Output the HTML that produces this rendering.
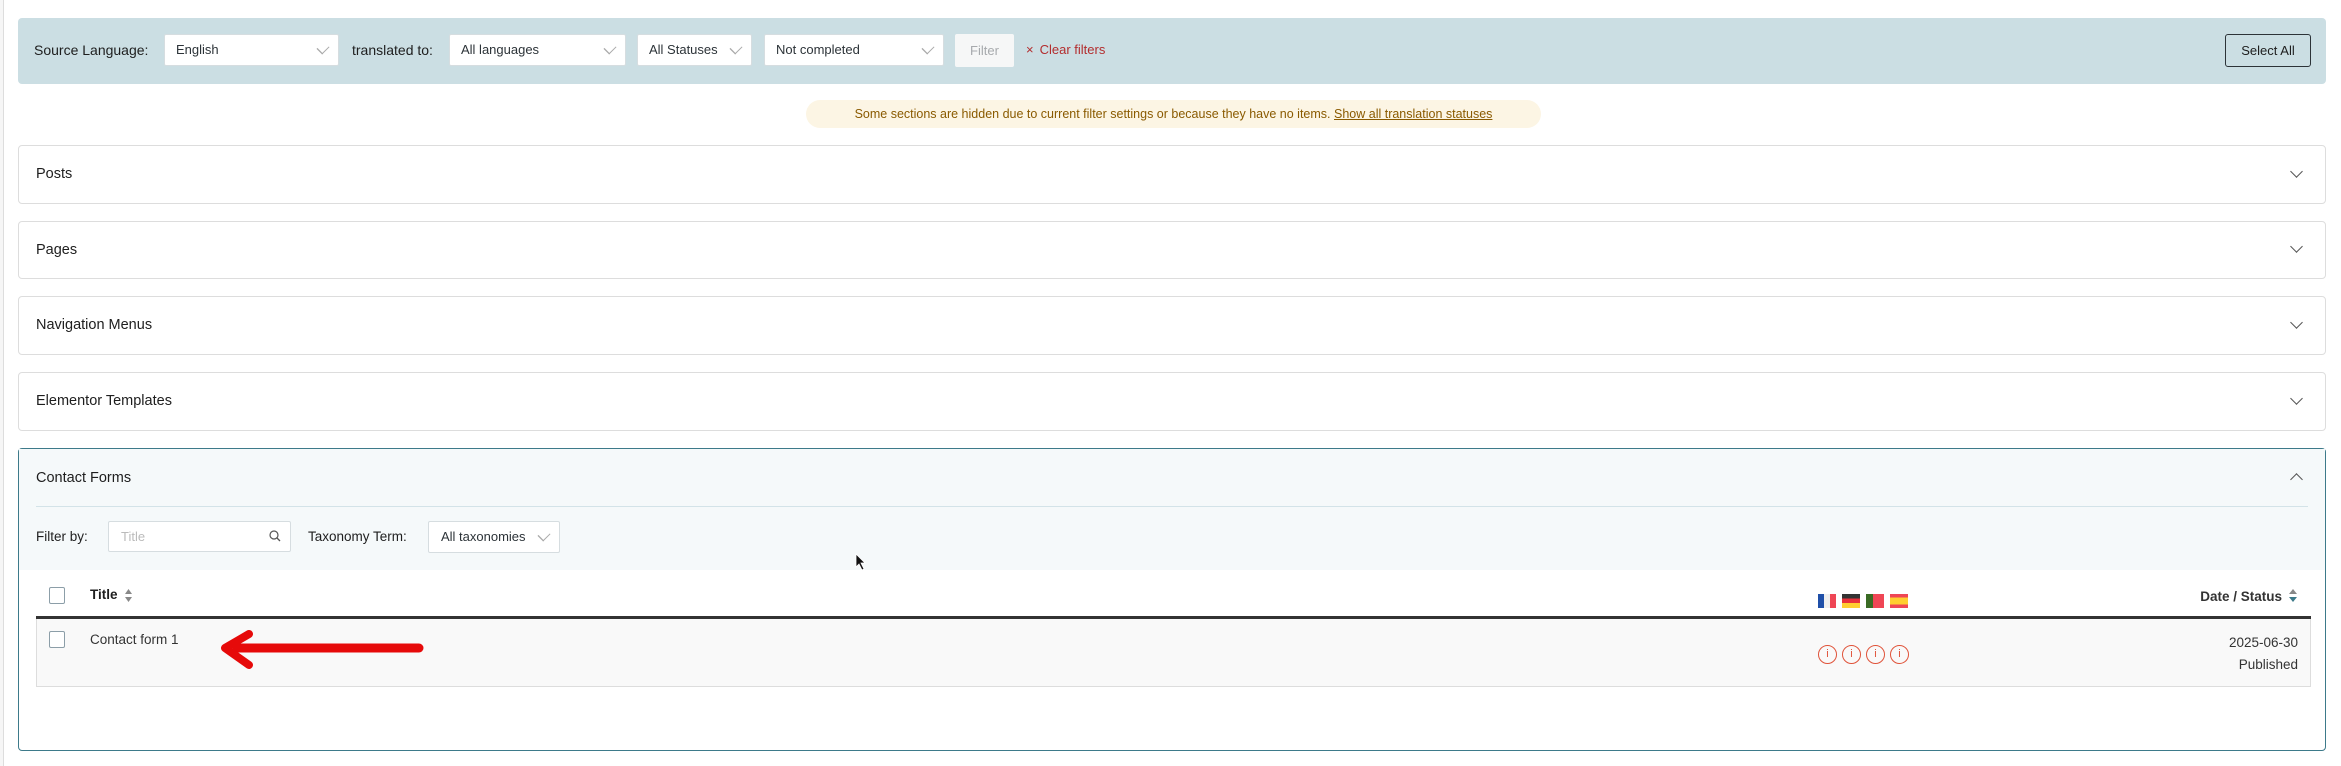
<!DOCTYPE html>
<html><head><meta charset="utf-8"><style>
*{box-sizing:border-box;margin:0;padding:0}
body{width:2341px;height:766px;background:#fff;font-family:"Liberation Sans",sans-serif;color:#1e1e1e;position:relative;overflow:hidden;font-size:14px}
.abs{position:absolute}
.lb{position:absolute;left:0;top:0;width:4px;height:766px;border-right:1px solid #ddd;background:#f6f6f6}
.banner{left:18px;top:18px;width:2308px;height:66px;background:#cbdee3;border-radius:4px}
.sel{position:absolute;top:34px;height:32px;background:#fff;border:1px solid #d6dde0;border-radius:2px;font-size:13px;padding-left:11px;line-height:30px;color:#2c3338}
.sel:after{content:"";position:absolute;right:11px;top:9px;width:7px;height:7px;border-right:1px solid #aaa;border-bottom:1px solid #aaa;transform:rotate(45deg) scaleY(1.3)}
.lbl{position:absolute;font-size:14px;color:#1e1e1e}
.box{position:absolute;left:18px;width:2308px;border:1px solid #ddd;border-radius:4px;background:#fff}
.box .t{position:absolute;left:17px;font-size:14.5px;font-weight:500;color:#1e1e1e}
.chev{position:absolute;right:24px;width:9px;height:9px;border-right:1.2px solid #555;border-bottom:1.2px solid #555;transform:rotate(45deg)}
.cb{position:absolute;width:16px;height:17px;border:1px solid #8c9ea8;border-radius:2px;background:#fff}
.info{position:absolute;top:643px;width:19px;height:19px;border:1.3px solid #e0533a;border-radius:50%;color:#e0533a;font-size:11px;text-align:center;line-height:17px}
</style></head><body>
<div class="lb"></div>
<div class="abs banner"></div>
<div class="lbl" style="left:34px;top:42px">Source Language:</div>
<div class="sel" style="left:164px;width:175px">English</div>
<div class="lbl" style="left:352px;top:42px">translated to:</div>
<div class="sel" style="left:449px;width:177px">All languages</div>
<div class="sel" style="left:637px;width:115px">All Statuses</div>
<div class="sel" style="left:764px;width:180px">Not completed</div>
<div class="abs" style="left:955px;top:34px;width:59px;height:33px;background:#f6f7f7;border-radius:2px;color:#a7aaad;font-size:13px;text-align:center;line-height:33px">Filter</div>
<div class="abs" style="left:1026px;top:42px;font-size:13px;color:#b32d2e"><span style="color:#b32d2e;margin-right:6px">×</span>Clear filters</div>
<div class="abs" style="left:2225px;top:34px;width:86px;height:33px;border:1px solid #2c3338;border-radius:3px;font-size:13px;text-align:center;line-height:31px">Select All</div>
<div class="abs" style="left:806px;top:100px;width:735px;height:28px;background:#fcf5e4;border-radius:14px;font-size:12.5px;color:#8a5a00;text-align:center;line-height:28px">Some sections are hidden due to current filter settings or because they have no items. <u>Show all translation statuses</u></div>

<div class="box" style="top:145px;height:59px"><div class="t" style="top:20px">Posts</div><div class="chev" style="top:21px"></div></div>
<div class="box" style="top:221px;height:58px"><div class="t" style="top:20px">Pages</div><div class="chev" style="top:20px"></div></div>
<div class="box" style="top:296px;height:59px"><div class="t" style="top:20px">Navigation Menus</div><div class="chev" style="top:21px"></div></div>
<div class="box" style="top:372px;height:59px"><div class="t" style="top:20px">Elementor Templates</div><div class="chev" style="top:21px"></div></div>

<div class="box" style="top:448px;height:303px;border-color:#3d7a8a">
 <div class="abs" style="left:0;top:0;width:2306px;height:121px;background:#f5f9fa"></div>
 <div class="t" style="top:21px">Contact Forms</div>
 <div class="chev" style="top:26px;transform:rotate(-135deg)"></div>
 <div class="abs" style="left:17px;top:57px;width:2272px;height:1px;background:#d3e3e8"></div>
</div>
<div class="lbl" style="left:36px;top:529px;font-size:13.5px">Filter by:</div>
<div class="abs" style="left:108px;top:521px;width:183px;height:31px;background:#fff;border:1px solid #d6dde0;border-radius:2px;font-size:13px;color:#bbb;padding-left:12px;line-height:29px">Title
 <svg class="abs" style="right:8px;top:7px" width="14" height="14" viewBox="0 0 14 14"><circle cx="6" cy="6" r="4" fill="none" stroke="#555" stroke-width="1.2"/><path d="M9 9l3 3" stroke="#555" stroke-width="1.3"/></svg></div>
<div class="lbl" style="left:308px;top:529px;font-size:13.5px">Taxonomy Term:</div>
<div class="sel" style="left:428px;top:521px;width:132px;height:32px;font-size:13px;padding-left:12px">All taxonomies</div>

<div class="cb" style="left:49px;top:587px"></div>
<div class="abs" style="left:90px;top:587px;font-size:13.5px;font-weight:bold">Title</div>
<svg class="abs" style="left:124px;top:588px" width="9" height="15" viewBox="0 0 9 15"><path d="M4.5 1L8 6H1z" fill="#888"/><path d="M4.5 14L8 9H1z" fill="#888"/></svg>
<div class="abs" style="left:1818px;top:594px;width:18px;height:14px;background:linear-gradient(90deg,#1f4fa8 33%,#eee 33% 66%,#ef4655 66%)"></div>
<div class="abs" style="left:1842px;top:594px;width:18px;height:14px;background:linear-gradient(#333 33%,#e8303b 33% 66%,#ffce30 66%)"></div>
<div class="abs" style="left:1866px;top:594px;width:18px;height:14px;background:linear-gradient(90deg,#3a6b24 40%,#ef4655 40%)"></div>
<div class="abs" style="left:1890px;top:594px;width:18px;height:14px;background:linear-gradient(#ef4655 25%,#ffce30 25% 75%,#ef4655 75%)"></div>
<div class="abs" style="left:2140px;top:589px;width:142px;text-align:right;font-size:13.5px;font-weight:bold;color:#333">Date / Status</div>
<svg class="abs" style="left:2288px;top:588px" width="10" height="15" viewBox="0 0 10 15"><path d="M5 1L9 6H1z" fill="#888"/><path d="M5 14L9 9H1z" fill="#3d7a8a"/></svg>
<div class="abs" style="left:36px;top:616px;width:2275px;height:3px;background:#333"></div>
<div class="abs" style="left:36px;top:619px;width:2275px;height:68px;background:#f9f9f9;border:1px solid #ddd;border-top:none"></div>
<div class="cb" style="left:49px;top:631px"></div>
<div class="abs" style="left:90px;top:632px;font-size:13.5px;color:#333">Contact form 1</div>
<svg class="abs" style="left:215px;top:630px" width="210" height="40" viewBox="0 0 210 40"><path d="M204 18H22" stroke="#e60a0a" stroke-width="9" stroke-linecap="round"/><path d="M34 4L10 18l24 17" fill="none" stroke="#e60a0a" stroke-width="8" stroke-linecap="round" stroke-linejoin="round"/></svg>
<div class="info" style="left:1818px;top:645px">i</div>
<div class="info" style="left:1842px;top:645px">i</div>
<div class="info" style="left:1866px;top:645px">i</div>
<div class="info" style="left:1890px;top:645px">i</div>
<div class="abs" style="left:2150px;top:632px;width:148px;text-align:right;font-size:13.5px;color:#333;line-height:22px">2025-06-30<br>Published</div>
<svg class="abs" style="left:855px;top:553px" width="12" height="18" viewBox="0 0 12 18"><path d="M1 1v13l3-3 3 6 2-1-3-6h4z" fill="#111" stroke="#fff" stroke-width=".8"/></svg>
</body></html>
